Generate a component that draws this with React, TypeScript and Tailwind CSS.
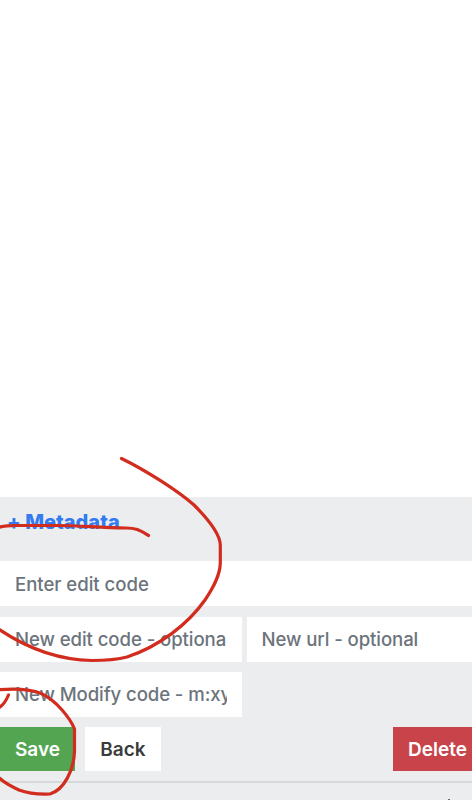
import React from 'react';

const field =
  'block h-[45px] min-w-0 rounded-none bg-white px-[15px] font-[550] text-[18.6px] leading-[45px] text-[#6c747c] placeholder:text-[#6c747c] placeholder:opacity-100 outline-none';

export default function App() {
  return (
    <div className="relative flex h-[800px] w-[472px] flex-col overflow-hidden bg-white font-['Inter','Liberation_Sans',sans-serif]">
      <main className="h-[497px] shrink-0 bg-white" />
      <section className="flex h-[303px] shrink-0 flex-col bg-[#ecedef]">
        <div className="flex h-16 shrink-0 items-start pl-[7px] pt-[11px]">
          <a className="whitespace-nowrap text-[20px] font-extrabold leading-7 tracking-[0.02px] text-[#347bf0]">+ Metadata</a>
        </div>
        <input className={field + ' w-full shrink-0 pt-px tracking-[-0.04px]'} placeholder="Enter edit code" />
        <div className="mt-[11px] flex shrink-0 gap-[5px]">
          <input className={field + ' w-[241.5px] shrink-0 tracking-[-0.08px]'} placeholder="New edit code - optiona" />
          <input className={field + ' flex-1 tracking-[-0.09px]'} placeholder="New url - optional" />
        </div>
        <input className={field + ' mt-[10px] w-[241.5px] shrink-0 tracking-[-0.1px]'} placeholder="New Modify code - m:xyz" />
        <div className="mt-[10px] flex h-[44px] shrink-0 text-[19px] font-semibold">
          <button className="w-[75px] bg-[#53a551] pl-[15px] pt-[2px] text-left text-white">Save</button>
          <button className="ml-[10px] w-[76px] bg-white pt-[2px] text-[#3a3b3c]">Back</button>
          <button className="ml-auto w-[79px] bg-[#c9444a] pl-[15px] pt-[2px] text-left text-white">Delete</button>
        </div>
        <div className="mt-[10px] h-[2px] shrink-0 bg-[#d7d9db]" />
        <div className="mt-[15.5px] ml-[448px] h-[1.5px] w-[1.5px] bg-[#65686b]" />
      </section>
      <svg className="pointer-events-none absolute inset-0" width="472" height="800" viewBox="0 0 472 800" fill="none" stroke="#d12c1e" strokeWidth="3.2" strokeLinecap="round" strokeLinejoin="round">
        <path d="M121.500 458.500C147 471 178 491 194 505C207 518 220 534 220.300 545V563C220 576 213 588 205 600C188 624 160 646 127 657C116 660 108 660.500 92 660.500C62 660 29 650 -3 628" />
        <path d="M-3 528C3 525.500 8 525.500 16 525.500H58C83 525.500 99 528 126 528C137 528 140 530.500 148.500 535.500" />
        <path d="M-3 709C3 706 6 701 8.500 695" />
        <path d="M-3 690C11 688.500 26 688 40 693C57 700 71 720 74.500 729V751C74 770 64 790 50 794C38 794.500 27 793 19 790C10 786 4 783 -3 776" />
      </svg>
    </div>
  );
}
